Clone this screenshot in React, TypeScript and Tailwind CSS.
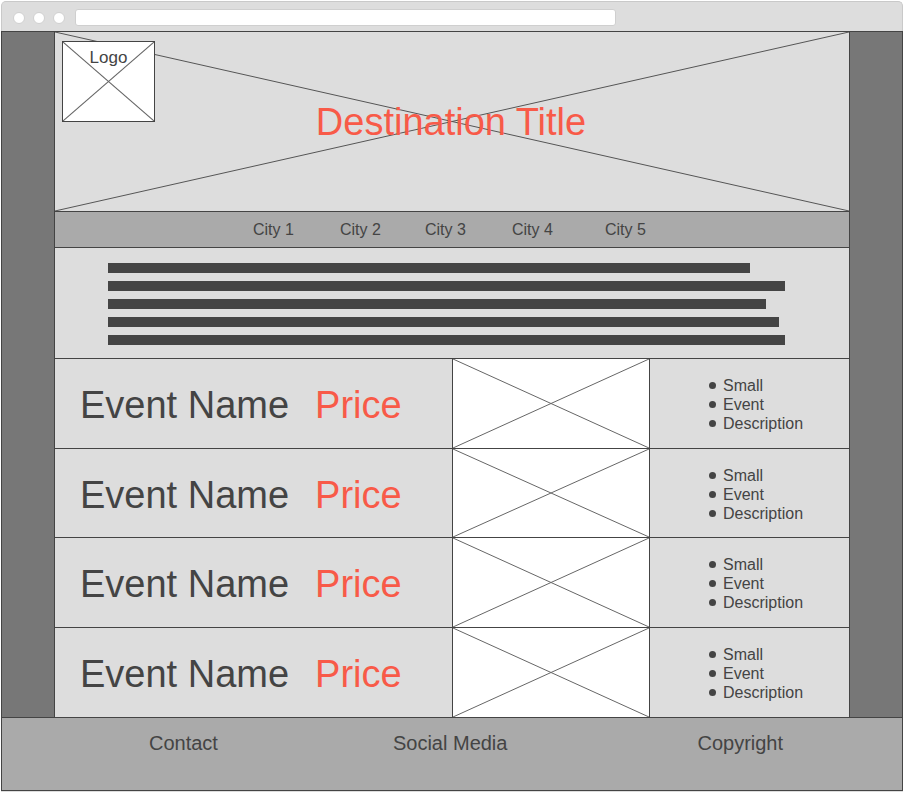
import React from 'react';

const font = { fontFamily: '"Liberation Sans", Arial, sans-serif' };

const cities = [
  { name: 'City 1', w: 'w-[87px]' },
  { name: 'City 2', w: 'w-[85px]' },
  { name: 'City 3', w: 'w-[87px]' },
  { name: 'City 4', w: 'w-[93px]' },
  { name: 'City 5', w: 'w-[60px]' },
];

const bars = ['w-[642px]', 'w-[677px]', 'w-[658px]', 'w-[671px]', 'w-[677px]'];

const rows = ['h-[90px] border-b', 'h-[89px] border-b', 'h-[90px] border-b', 'h-[89px]'];

// placeholder "image" cross
const Cross = ({ color = '#555' }: { color?: string }) => (
  <svg className="absolute inset-0 w-full h-full" preserveAspectRatio="none" viewBox="0 0 100 100">
    <line x1="0" y1="0" x2="100" y2="100" stroke={color} strokeWidth="1" vectorEffect="non-scaling-stroke" />
    <line x1="100" y1="0" x2="0" y2="100" stroke={color} strokeWidth="1" vectorEffect="non-scaling-stroke" />
  </svg>
);

export default function App() {
  return (
    <div className="w-[904px] h-[792px] bg-white overflow-hidden" style={font}>
      <div className="ml-[1px] w-[902px]">
        {/* browser chrome */}
        <div className="h-[30px] mt-[1px] bg-[#dddddd] border border-b-0 border-[#c9c9c9] rounded-t-[5px] flex items-start">
          <div className="flex gap-[8px] ml-[11px] mt-[10px]">
            <span className="w-[12px] h-[12px] rounded-full bg-white border border-[#d0d0d0]" />
            <span className="w-[12px] h-[12px] rounded-full bg-white border border-[#d0d0d0]" />
            <span className="w-[12px] h-[12px] rounded-full bg-white border border-[#d0d0d0]" />
          </div>
          <div className="ml-[10px] mt-[7px] w-[541px] h-[17px] bg-white border border-[#cfcfcf] rounded-[3px]" />
        </div>

        {/* page */}
        <div className="bg-[#777777] border-x border-t border-[#444444] h-[686px]">
          <div className="ml-[52px] w-[796px] border-x border-[#444444] flex flex-col">
            {/* hero */}
            <div className="relative h-[180px] bg-[#dddddd] border-b border-[#444444] flex items-center justify-center">
              <Cross color="#555" />
              <div className="absolute top-[9px] left-[7px] w-[93px] h-[81px] bg-white border border-[#444444] flex justify-center">
                <Cross color="#666" />
                <span className="relative pt-[3px] text-[17px] text-[#444444]">Logo</span>
              </div>
              <h1 className="relative text-[38px] leading-none text-[#f85a48] pr-[2px]">Destination Title</h1>
            </div>

            {/* nav */}
            <div className="h-[36px] bg-[#aaaaaa] border-b border-[#444444] flex items-center pl-[198px]">
              {cities.map((c) => (
                <span key={c.name} className={`${c.w} text-[16px] text-[#444444]`}>{c.name}</span>
              ))}
            </div>

            {/* intro text */}
            <div className="h-[111px] bg-[#dddddd] border-b border-[#444444] pt-[15px] pl-[53px] flex flex-col gap-[8px]">
              {bars.map((w, i) => (
                <div key={i} className={`${w} h-[10px] bg-[#444444]`} />
              ))}
            </div>

            {/* events */}
            {rows.map((r, i) => (
              <div key={i} className={`${r} border-[#444444] bg-[#dddddd] flex`}>
                <div className="w-[397px] flex items-center pl-[25px] pt-[3px] text-[38px] leading-none">
                  <span className="text-[#444444]">Event Name</span>
                  <span className="ml-[26px] text-[#f85a48]">Price</span>
                </div>
                <div className="relative w-[198px] bg-white border-x border-[#444444]">
                  <Cross color="#666" />
                </div>
                <div className="w-[199px] flex items-center pl-[59px] pt-[2px]">
                  <ul className="text-[16px] leading-[19px] text-[#444444]">
                    {['Small', 'Event', 'Description'].map((t) => (
                      <li key={t} className="flex items-center">
                        <span className="w-[7px] h-[7px] rounded-full bg-[#444444] mr-[7px]" />
                        {t}
                      </li>
                    ))}
                  </ul>
                </div>
              </div>
            ))}
          </div>
        </div>

        {/* footer */}
        <div className="h-[74px] bg-[#aaaaaa] border border-[#444444] flex items-start pt-[10px] text-[20px] text-[#444444]">
          <span className="ml-[147px]">Contact</span>
          <span className="ml-[175px]">Social Media</span>
          <span className="ml-[190px]">Copyright</span>
        </div>
        <div className="h-[1px] bg-[#dddddd]" />
      </div>
    </div>
  );
}
